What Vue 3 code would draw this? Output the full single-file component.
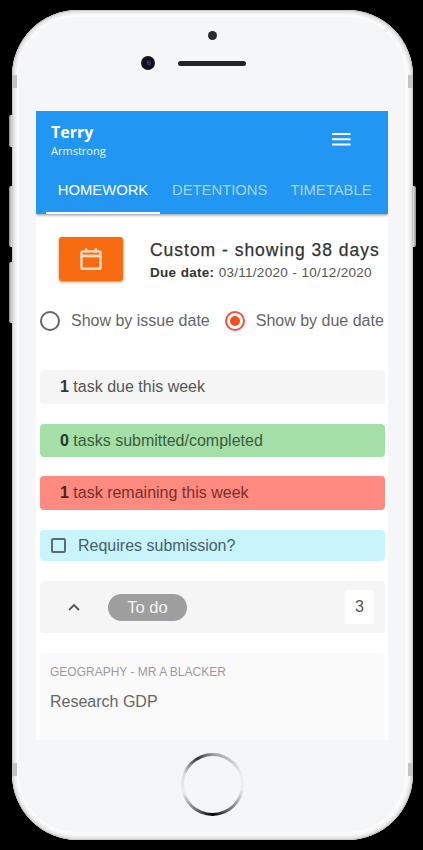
<script setup>
const bars = [
  { n: '1', text: ' task due this week', cls: 'grey' },
  { n: '0', text: ' tasks submitted/completed', cls: 'green' },
  { n: '1', text: ' task remaining this week', cls: 'red' }
]
</script>

<template>
  <div class="page">
    <div class="phone">
      <span class="side s1"></span>
      <span class="side s2"></span>
      <span class="side s3"></span>
      <span class="side s4"></span>
      <span class="antenna a1"></span>
      <span class="antenna a2"></span>
      <span class="antenna a3"></span>
      <span class="antenna a4"></span>
      <div class="glass">
        <div class="top">
          <span class="sensor"></span>
          <div class="top-row">
            <span class="camera"></span>
            <span class="speaker"></span>
          </div>
        </div>
        <div class="screen">
          <header class="header">
            <div class="toolbar">
              <div class="names">
                <div class="first">Terry</div>
                <div class="last">Armstrong</div>
              </div>
              <svg class="menu" width="20" height="14" viewBox="0 0 20 14">
                <path d="M1 2h18.5M1 7.2h18.5M1 12.5h18.5" stroke="#fff" stroke-width="2" fill="none" />
              </svg>
            </div>
            <nav class="tabs">
              <span class="tab active">HOMEWORK</span>
              <span class="tab t2">DETENTIONS</span>
              <span class="tab t3">TIMETABLE</span>
            </nav>
          </header>
          <main class="content">
            <section class="range">
              <div class="cal">
                <svg width="26" height="26" viewBox="0 0 24 24" fill="none" stroke="#fbdcc6" stroke-width="2.2">
                  <rect x="3.2" y="5" width="17.6" height="16" rx="1.5" />
                  <path d="M3.2 9.2h17.6" stroke-width="2.6" />
                  <path d="M7.5 2v4M16.5 2v4" />
                </svg>
              </div>
              <div class="range-text">
                <div class="range-title">Custom - showing 38 days</div>
                <div class="range-dates"><b>Due date:</b> 03/11/2020 - 10/12/2020</div>
              </div>
            </section>
            <section class="radios">
              <span class="radio"></span>
              <span class="radio-label">Show by issue date</span>
              <span class="radio on"><i></i></span>
              <span class="radio-label">Show by due date</span>
            </section>
            <div v-for="b in bars" :key="b.cls" class="bar" :class="b.cls"><b>{{ b.n }}</b>{{ b.text }}</div>
            <label class="submission">
              <span class="check"></span>
              <span>Requires submission?</span>
            </label>
            <section class="group">
              <svg class="chev" width="14" height="9" viewBox="0 0 14 9" fill="none" stroke="#555" stroke-width="1.8">
                <path d="M2 7l5-5 5 5" />
              </svg>
              <span class="pill">To do</span>
              <span class="count">3</span>
            </section>
            <article class="card">
              <div class="subject">GEOGRAPHY - MR A BLACKER</div>
              <div class="task">Research GDP</div>
            </article>
          </main>
        </div>
        <div class="bottom">
          <span class="home"><span class="home-in"></span></span>
        </div>
      </div>
    </div>
  </div>
</template>

<style scoped>
.page {
  width: 423px;
  height: 850px;
  background: #000;
  padding: 10px 0 0 12px;
  box-sizing: border-box;
  overflow: hidden;
  font-family: "Liberation Sans", Arial, sans-serif;
}
.phone {
  position: relative;
  width: 401px;
  height: 830px;
  box-sizing: border-box;
  padding: 7px 8px 8px 7px;
  background: #fbfbfc;
  border-radius: 66px;
  box-shadow: inset 0 0 0 1px #c9c9ca, inset 0 0 3px 3px #dedede;
}
.side {
  position: absolute;
  background: linear-gradient(90deg, #8a8a8a, #e6e6e6);
  border-radius: 2px 0 0 2px;
}
.s1 { left: -3px; top: 105px; width: 3px; height: 32px; }
.s2 { left: -3px; top: 176px; width: 3px; height: 61px; }
.s3 { left: -3px; top: 252px; width: 3px; height: 61px; }
.s4 { right: -3px; top: 176px; width: 3px; height: 61px; background: linear-gradient(90deg, #e6e6e6, #8a8a8a); border-radius: 0 2px 2px 0; }
.antenna {
  position: absolute;
  width: 5px;
  height: 13px;
  background: #c4c4c4;
}
.a1 { left: 0; top: 65px; }
.a2 { right: 0; top: 65px; }
.a3 { left: 0; top: 753px; }
.a4 { right: 0; top: 753px; }
.glass {
  height: 100%;
  background: #f5f6f8;
  border-radius: 58px;
  display: flex;
  flex-direction: column;
  align-items: center;
}
.top {
  height: 94px;
  flex: none;
  display: flex;
  flex-direction: column;
  align-items: center;
  padding-top: 14px;
  box-sizing: border-box;
}
.sensor {
  width: 9px;
  height: 9px;
  border-radius: 50%;
  background: #2a2a2c;
}
.top-row {
  display: flex;
  align-items: center;
  gap: 23px;
  margin-top: 16px;
  margin-left: -38px;
}
.camera {
  width: 14px;
  height: 14px;
  border-radius: 50%;
  background: radial-gradient(circle at 55% 50%, #2c3050 0 2px, #0a0d28 3px, #15161c 7px);
}
.speaker {
  width: 68px;
  height: 5px;
  border-radius: 3px;
  background: #252527;
}
.screen {
  width: 352px;
  height: 629px;
  flex: none;
  background: #fff;
  overflow: hidden;
}
.header {
  background: #2196f3;
  height: 103px;
  position: relative;
  box-shadow: 0 1px 3px rgba(0, 0, 0, 0.45);
}
.toolbar {
  height: 62px;
  display: flex;
  align-items: flex-start;
  justify-content: space-between;
  padding: 12px 37px 0 15px;
  box-sizing: border-box;
}
.first {
  font-family: "Open Sans", sans-serif;
  font-size: 16px;
  line-height: 18px;
  font-weight: 700;
  color: #fff;
}
.last {
  font-family: "Open Sans", sans-serif;
  font-size: 11px;
  line-height: 15px;
  margin-top: 2px;
  color: #eef7ff;
}
.menu {
  margin-top: 9px;
}
.tabs {
  display: flex;
  height: 41px;
  font-size: 14.8px;
  line-height: 34px;
  color: #a6d5fa;
}
.tab {
  white-space: nowrap;
}
.active {
  width: 114px;
  margin-left: 10px;
  text-align: center;
  color: #fff;
  border-bottom: 2px solid #fff;
  height: 39px;
}
.t2 { margin-left: 12px; }
.t3 { margin-left: 23px; }
.content {
  padding: 23px 3px 0 4px;
}
.range {
  display: flex;
  align-items: flex-start;
  padding-left: 19px;
}
.cal {
  width: 64px;
  height: 44px;
  flex: none;
  border-radius: 3px;
  background: #f96b10;
  box-shadow: 0 1px 3px rgba(120, 60, 10, 0.6);
  display: flex;
  align-items: center;
  justify-content: center;
}
.range-text {
  margin-left: 27px;
  white-space: nowrap;
  color: #333;
}
.range-title {
  font-size: 17.5px;
  line-height: 22px;
  margin-top: 2px;
  letter-spacing: 0.98px;
  -webkit-text-stroke: 0.25px #333;
}
.range-dates {
  font-size: 13.5px;
  line-height: 18px;
  margin-top: 3px;
  color: #555;
  letter-spacing: 0.28px;
  word-spacing: 0.3px;
}
.range-dates b {
  color: #333;
}
.radios {
  display: flex;
  align-items: center;
  height: 22px;
  margin-top: 28px;
  white-space: nowrap;
  font-size: 16px;
  color: #666;
}
.radio {
  width: 20px;
  height: 20px;
  flex: none;
  box-sizing: border-box;
  border: 2px solid #666;
  border-radius: 50%;
  display: flex;
  align-items: center;
  justify-content: center;
}
.radio-label {
  margin-left: 11px;
  margin-right: 15px;
}
.radio.on {
  border-color: #f0523f;
}
.radio.on i {
  width: 10px;
  height: 10px;
  border-radius: 50%;
  background: #f4511e;
}
.bar {
  height: 34px;
  line-height: 33px;
  box-sizing: border-box;
  padding-left: 20px;
  border-radius: 4px;
  font-size: 16px;
  margin-bottom: 20px;
}
.grey {
  margin-top: 38px;
  background: #f5f5f5;
  color: #555;
}
.green {
  height: 33px;
  background: #a5dfa8;
  color: #3c5c40;
  margin-bottom: 19px;
}
.red {
  background: #fe8a80;
  color: #7a2f2a;
}
.bar b {
  font-weight: 700;
}
.green b { color: #22382a; }
.red b { color: #4c1f1c; }
.grey b { color: #333; }
.submission {
  height: 31px;
  display: flex;
  align-items: center;
  background: #c8f4fc;
  border-radius: 4px;
  padding-left: 11px;
  font-size: 16px;
  color: #466068;
}
.check {
  width: 15px;
  height: 15px;
  box-sizing: border-box;
  border: 2px solid #5e6c70;
  border-radius: 2px;
  margin-right: 12px;
}
.group {
  height: 52px;
  margin-top: 20px;
  display: flex;
  align-items: center;
  background: #f5f5f5;
  border-radius: 4px;
  padding: 0 11px 0 27px;
}
.pill {
  width: 79px;
  height: 27px;
  line-height: 27px;
  margin-left: 27px;
  border-radius: 14px;
  background: #9e9e9e;
  color: #f5f5f5;
  text-align: center;
  font-size: 16.5px;
}
.count {
  margin-left: auto;
  width: 29px;
  height: 34px;
  line-height: 34px;
  background: #fff;
  text-align: center;
  font-size: 16px;
  color: #555;
}
.card {
  margin-top: 20px;
  height: 90px;
  background: #fafafa;
  border-radius: 4px;
  padding: 12px 10px;
  box-sizing: border-box;
}
.subject {
  font-size: 12px;
  line-height: 14px;
  color: #9a9a9a;
}
.task {
  font-size: 16px;
  line-height: 20px;
  margin-top: 13px;
  color: #666;
}
.bottom {
  flex: 1;
  display: flex;
  align-items: flex-start;
  padding-top: 13px;
}
.home {
  width: 63px;
  height: 63px;
  box-sizing: border-box;
  border-radius: 50%;
  padding: 3px;
  background: conic-gradient(#999, #eee 70deg, #eee 100deg, #666 150deg, #000 180deg, #666 210deg, #eee 255deg, #ddd 290deg, #333 330deg, #999);
}
.home-in {
  display: block;
  width: 100%;
  height: 100%;
  border-radius: 50%;
  background: #f5f6f8;
}
</style>

<style>
html, body { background: #000; overflow: hidden; }
</style>
